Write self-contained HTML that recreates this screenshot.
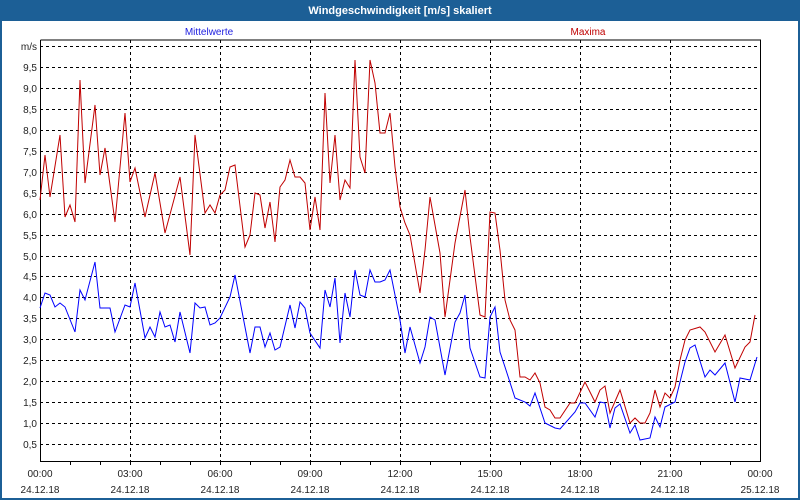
<!DOCTYPE html>
<html><head><meta charset="utf-8"><style>
html,body{margin:0;padding:0;background:#fff}
body{width:800px;height:500px;overflow:hidden;font-family:"Liberation Sans",Tahoma,sans-serif}
</style></head><body>
<svg width="800" height="500" xmlns="http://www.w3.org/2000/svg" style="display:block;font-family:'Liberation Sans',sans-serif">
<rect x="0" y="0" width="800" height="500" fill="#1c5f96"/>
<rect x="2" y="21" width="796" height="477" fill="#fff"/>
<text x="400" y="14" fill="#fff" font-size="11" font-weight="bold" text-anchor="middle">Windgeschwindigkeit [m/s] skaliert</text>
<text x="209" y="35" fill="#2020e0" font-size="10" text-anchor="middle">Mittelwerte</text>
<text x="588" y="35" fill="#c00000" font-size="10" text-anchor="middle">Maxima</text>
<g stroke="#000" stroke-width="1" stroke-dasharray="3,3" fill="none">
<path d="M40 46.5H760M40 67.5H760M40 88.5H760M40 109.5H760M40 130.5H760M40 151.5H760M40 172.5H760M40 193.5H760M40 214.5H760M40 235.5H760M40 256.5H760M40 276.5H760M40 297.5H760M40 318.5H760M40 339.5H760M40 360.5H760M40 381.5H760M40 402.5H760M40 423.5H760M40 444.5H760"/>
<path d="M130.5 40V461M220.5 40V461M310.5 40V461M400.5 40V461M490.5 40V461M580.5 40V461M670.5 40V461"/>
</g>
<g stroke="#000" stroke-width="1" fill="none">
<path d="M40.5 40V461.5H760.5V40H40.5"/>
<path d="M70.5 461v4M100.5 461v4M130.5 461v4M160.5 461v4M190.5 461v4M220.5 461v4M250.5 461v4M280.5 461v4M310.5 461v4M340.5 461v4M370.5 461v4M400.5 461v4M430.5 461v4M460.5 461v4M490.5 461v4M520.5 461v4M550.5 461v4M580.5 461v4M610.5 461v4M640.5 461v4M670.5 461v4M700.5 461v4M730.5 461v4"/>
</g>
<g font-size="10" fill="#222" text-anchor="end">
<text x="37" y="50">m/s</text>
<text x="37" y="71">9,5</text><text x="37" y="92">9,0</text><text x="37" y="113">8,5</text><text x="37" y="134">8,0</text><text x="37" y="155">7,5</text><text x="37" y="176">7,0</text><text x="37" y="197">6,5</text><text x="37" y="218">6,0</text><text x="37" y="239">5,5</text><text x="37" y="260">5,0</text><text x="37" y="280">4,5</text><text x="37" y="301">4,0</text><text x="37" y="322">3,5</text><text x="37" y="343">3,0</text><text x="37" y="364">2,5</text><text x="37" y="385">2,0</text><text x="37" y="406">1,5</text><text x="37" y="427">1,0</text><text x="37" y="448">0,5</text>
</g>
<g font-size="10" fill="#222" text-anchor="middle">
<text x="40" y="477">00:00</text><text x="130" y="477">03:00</text><text x="220" y="477">06:00</text><text x="310" y="477">09:00</text><text x="400" y="477">12:00</text><text x="490" y="477">15:00</text><text x="580" y="477">18:00</text><text x="670" y="477">21:00</text><text x="760" y="477">00:00</text>
<text x="40" y="493">24.12.18</text><text x="130" y="493">24.12.18</text><text x="220" y="493">24.12.18</text><text x="310" y="493">24.12.18</text><text x="400" y="493">24.12.18</text><text x="490" y="493">24.12.18</text><text x="580" y="493">24.12.18</text><text x="670" y="493">24.12.18</text><text x="760" y="493">25.12.18</text>
</g>
<polyline fill="none" stroke="#c00000" stroke-width="1" points="40,200 45,155 50,197 60,135 65,217 70,205 75,222 80,80 85,183 95,105 100,175 105,148 115,222 125,113 130,182 135,168 145,217 155,173 165,233 180,177 190,255 195,135 205,213 210,205 215,213 220,195 225,190 230,167 235,165 245,247 250,235 255,193 260,195 265,228 270,202 275,242 280,187 285,180 290,160 295,177 300,177 305,183 310,230 315,197 320,230 325,93 330,183 335,135 340,200 345,180 350,188 355,60 360,157 365,173 370,60 375,83 380,133 385,133 390,113 395,167 400,207 405,223 410,235 420,293 425,250 430,197 440,253 445,317 455,243 465,190 470,237 480,315 485,317 490,212 495,213 500,250 505,300 510,320 515,330 520,377 525,377 530,380 535,373 540,383 545,407 550,410 555,418 560,418 570,403 575,403 585,382 595,402 600,390 605,386 610,413 620,390 630,423 635,418 640,423 645,423 650,413 655,390 660,407 665,393 670,398 675,387 680,360 685,340 690,330 700,327 705,332 715,352 725,335 735,368 745,347 750,342 755,315"/>
<polyline fill="none" stroke="#0000ff" stroke-width="1" points="40,308 45,293 50,295 55,307 60,303 65,307 75,332 80,290 85,300 95,262 100,308 110,308 115,332 125,305 130,307 135,283 145,338 150,327 155,337 160,312 165,327 170,325 175,342 180,312 190,353 195,303 200,308 205,307 210,325 215,323 220,318 230,297 235,275 250,353 255,327 260,327 265,347 270,333 275,350 280,347 290,305 295,328 300,302 305,308 310,333 320,348 325,290 330,307 335,278 340,343 345,293 350,317 355,270 360,295 365,297 370,270 375,282 380,282 385,280 390,270 400,320 405,353 410,327 420,363 425,347 430,317 435,320 445,375 455,322 460,313 465,295 470,348 480,377 485,378 490,317 495,307 500,352 505,367 515,398 525,402 530,406 535,393 545,423 555,428 560,429 575,412 580,403 585,403 595,417 600,402 605,403 610,428 615,408 620,404 630,433 635,425 640,440 650,438 655,417 660,427 665,407 675,402 685,362 690,348 695,345 705,377 710,370 715,375 725,363 735,402 740,378 750,380 757,357"/>
</svg>
</body></html>
